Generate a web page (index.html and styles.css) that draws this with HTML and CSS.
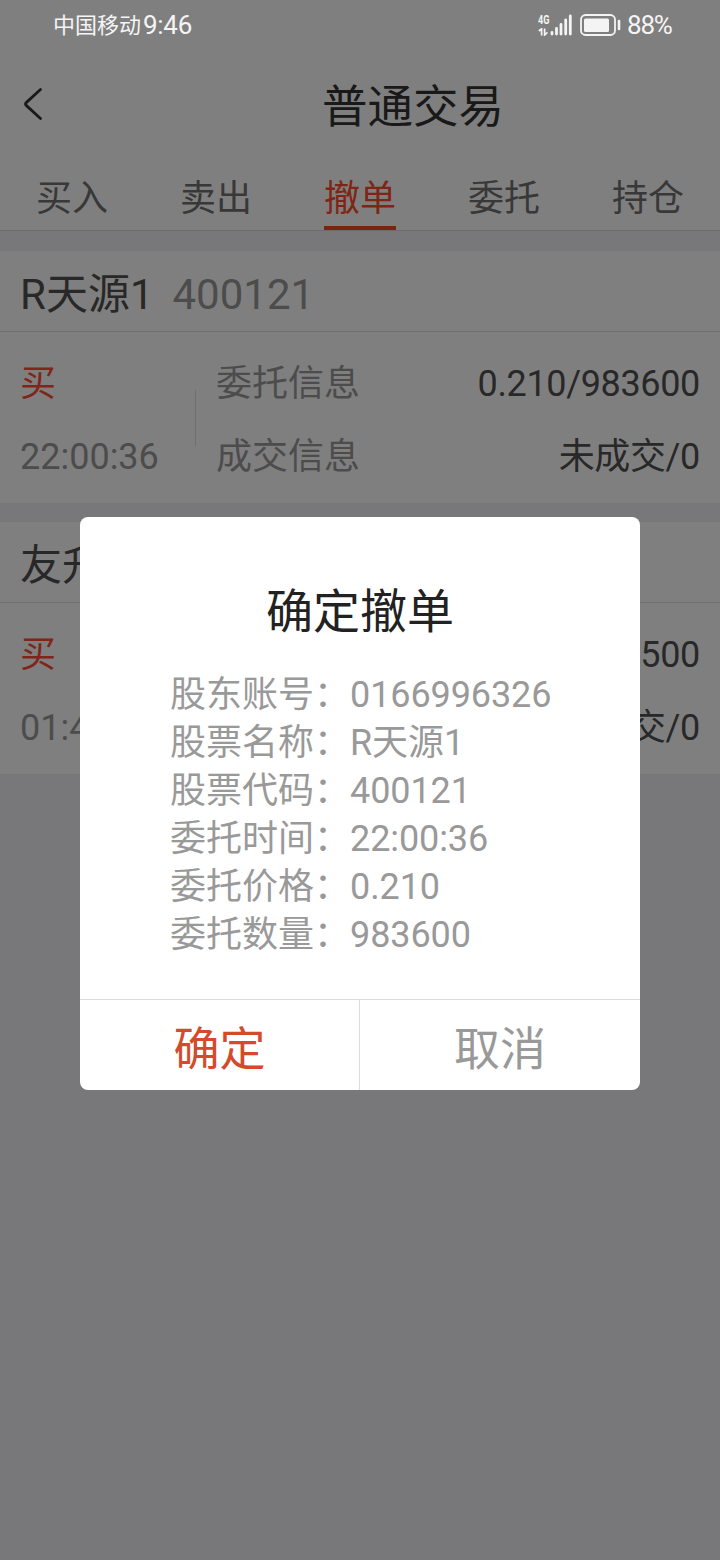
FILE: index.html
```html
<!DOCTYPE html>
<html lang="zh-CN">
<head>
  <meta charset="UTF-8">
  <meta name="viewport" content="width=device-width, initial-scale=1">
  <title>普通交易</title>
  <link rel="stylesheet" href="styles.css">
</head>
<body>
  <div class="page">
    <!-- Header -->
    <header class="header">
      <svg class="back" width="20" height="34" viewBox="0 0 20 34">
        <path d="M17.5 2.5 L3.2 15.6 Q1.8 17 3.2 18.4 L17.5 31.5" fill="none" stroke="currentColor" stroke-width="2.8" stroke-linecap="round"/>
      </svg>
      <h1 class="title">普通交易</h1>
    </header>

    <!-- Tabs -->
    <nav class="tabs">
      <a class="tab">买入</a>
      <a class="tab">卖出</a>
      <a class="tab active">撤单</a>
      <a class="tab">委托</a>
      <a class="tab">持仓</a>
    </nav>

    <!-- Orders -->
    <main class="orders">
      <section class="order">
        <div class="order-head">
          <span class="stock-name">R天源1</span>
          <span class="stock-code">400121</span>
        </div>
        <div class="order-body">
          <div class="order-side">
            <span class="buy">买</span>
            <span class="time">22:00:36</span>
          </div>
          <div class="order-info">
            <div class="row"><span class="label">委托信息</span><span class="value">0.210/983600</span></div>
            <div class="row"><span class="label">成交信息</span><span class="value">未成交/0</span></div>
          </div>
        </div>
      </section>
      <section class="order">
        <div class="order-head">
          <span class="stock-name">友升</span>
        </div>
        <div class="order-body">
          <div class="order-side">
            <span class="buy">买</span>
            <span class="time">01:4</span>
          </div>
          <div class="order-info">
            <div class="row"><span class="value">500</span></div>
            <div class="row"><span class="value">交/0</span></div>
          </div>
        </div>
      </section>
    </main>
  </div>

  <!-- Mask and confirm dialog -->
  <div class="mask">
    <div class="dialog">
      <h2 class="dialog-title">确定撤单</h2>
      <ul class="detail">
        <li><span class="key">股东账号：</span><span>0166996326</span></li>
        <li><span class="key">股票名称：</span><span>R天源1</span></li>
        <li><span class="key">股票代码：</span><span>400121</span></li>
        <li><span class="key">委托时间：</span><span>22:00:36</span></li>
        <li><span class="key">委托价格：</span><span>0.210</span></li>
        <li><span class="key">委托数量：</span><span>983600</span></li>
      </ul>
      <div class="actions">
        <button class="btn confirm">确定</button>
        <button class="btn cancel">取消</button>
      </div>
    </div>
  </div>

  <!-- Phone status bar -->
  <div class="status">
    <span class="carrier">中国移动</span>
    <span class="clock">9:46</span>
    <div class="signal">
      <div class="net">
        <span class="net-type">4G</span>
        <svg width="12" height="8" viewBox="0 0 12 8">
          <path d="M0.8 3 L3.6 0.8 V7.5 M6.6 0.5 V7 L9.4 4.4" fill="none" stroke="currentColor" stroke-width="1.7"/>
        </svg>
      </div>
      <svg width="23" height="22" viewBox="0 0 23 22">
        <path d="M2 18.5 V20 M6.5 14.5 V20 M11 10.5 V20 M15.7 6 V20 M20.3 2 V20" stroke="currentColor" stroke-width="2.8" stroke-linecap="round"/>
      </svg>
    </div>
    <svg class="battery" width="42" height="22" viewBox="0 0 42 22">
      <rect x="1" y="1" width="34" height="20" rx="4.5" fill="none" stroke="currentColor" stroke-width="1.8"/>
      <rect x="4" y="4.5" width="25" height="13.5" rx="1.5" fill="currentColor"/>
      <path d="M39 7 V15" stroke="currentColor" stroke-width="2.6" stroke-linecap="round"/>
    </svg>
    <span class="percent">88%</span>
  </div>
</body>
</html>
```
FILE: styles.css
```css
*, *::before, *::after {
  margin: 0;
  padding: 0;
  box-sizing: border-box;
}
body {
  position: relative;
  height: 1560px;
  font-family: Roboto, 'Noto Sans CJK SC', sans-serif;
  font-size: 36px;
  font-weight: 400;
  background: #f0f0f4;
  color: #505050;
  overflow: hidden;
}
/* Header */
.header {
  display: flex;
  align-items: center;
  height: 162px;
  padding: 50px 0 4px;
  background: #fff;
  color: #333;
}
.back {
  width: 20px;
  margin-left: 23px;
  margin-right: -43px;
}
.title {
  flex: 1;
  padding-top: 7px;
  padding-left: 106px;
  font-size: 45.5px;
  line-height: 60px;
  font-weight: 400;
  text-align: center;
}
/* Tabs */
.tabs {
  display: flex;
  justify-content: space-around;
  height: 69px;
  border-bottom: 1px solid #d8d8da;
  background: #fff;
}
.tab {
  width: 72px;
  height: 68px;
  line-height: 75px;
  text-align: center;
  color: #707070;
}
.tab.active {
  color: #ff4a2a;
  border-bottom: 4px solid #f04a1c;
}
/* Orders */
.order {
  margin-top: 19px;
  background: #fff;
}
.order:first-child {
  margin-top: 20px;
}
.order-head {
  display: flex;
  align-items: center;
  height: 81px;
  padding: 7px 20px 0;
  gap: 19px;
  border-bottom: 1px solid #dedede;
  font-size: 42px;
  line-height: 60px;
}
.stock-code {
  color: #999;
}
.order-body {
  display: flex;
  align-items: center;
  height: 171px;
  line-height: 73px;
}
.order-side {
  display: flex;
  flex-direction: column;
  width: 195px;
  padding: 6px 0 0 20px;
}
.buy {
  color: #ff4a36;
}
.time,
.label {
  color: #999;
}
.order-info {
  flex: 1;
  padding: 6px 20px 0 21px;
  background: linear-gradient(#dedede, #dedede) left center / 1px 56px no-repeat;
}
.row {
  display: flex;
}
.value {
  margin-left: auto;
  letter-spacing: -0.35px;
}
/* Dialog */
.mask {
  position: absolute;
  inset: 0;
  padding: 517px 80px 0;
  background: rgba(0, 0, 0, 0.5);
}
.dialog {
  height: 573px;
  padding-top: 65px;
  border-radius: 8px;
  background: #fff;
  overflow: hidden;
}
.dialog-title {
  font-size: 47px;
  line-height: 60px;
  font-weight: 400;
  text-align: center;
  color: #222;
}
.detail {
  list-style: none;
  margin-top: 29px;
  padding-left: 90px;
  line-height: 48px;
  letter-spacing: -0.1px;
  color: #999;
}
.detail li {
  display: flex;
}
.key {
  width: 180px;
  letter-spacing: 0;
}
.actions {
  display: flex;
  height: 91px;
  margin-top: 40px;
  border-top: 1px solid #dcdcdc;
}
.btn {
  width: 280px;
  border: none;
  background: none;
  font-family: inherit;
  font-size: 46px;
  color: #999;
}
.confirm {
  border-right: 1px solid #dcdcdc;
  color: #d34a2c;
}
/* Status bar */
.status {
  position: absolute;
  top: 0;
  left: 0;
  width: 720px;
  height: 50px;
  display: flex;
  align-items: center;
  padding-left: 53px;
  color: #f4f4f4;
  line-height: 30px;
}
.carrier {
  padding-top: 2px;
  font-size: 22px;
}
.clock {
  width: 52px;
  margin-left: 2px;
  font-size: 26px;
  letter-spacing: -0.3px;
}
.signal {
  display: flex;
  align-items: center;
  margin-left: 343px;
}
.net {
  display: flex;
  flex-direction: column;
  gap: 2px;
  width: 12px;
  line-height: 12px;
}
.net-type {
  font-size: 13px;
  font-weight: 700;
  transform: scaleX(0.7);
  transform-origin: left;
}
.battery {
  margin-left: 7px;
}
.percent {
  margin-left: 5px;
  font-size: 26px;
  letter-spacing: -1.2px;
}
```
